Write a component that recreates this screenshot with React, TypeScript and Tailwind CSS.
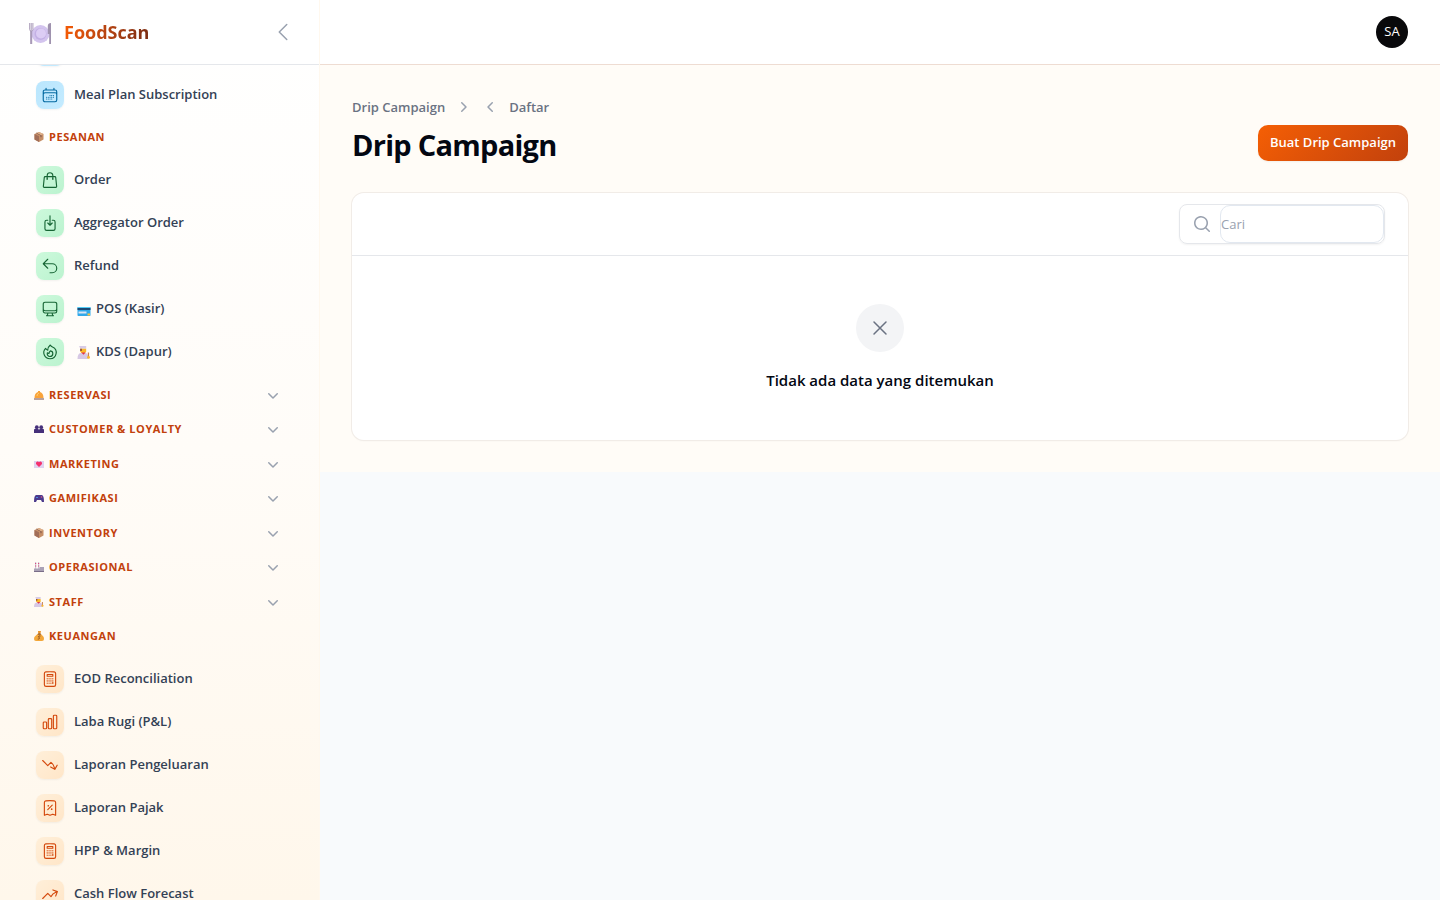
import type { ComponentType, ReactNode } from 'react';
import {
    HiOutlineArrowDownOnSquare,
    HiOutlineArrowTrendingDown,
    HiOutlineArrowTrendingUp,
    HiOutlineArrowUturnLeft,
    HiOutlineCalculator,
    HiOutlineCalendarDays,
    HiOutlineChartBar,
    HiOutlineChevronLeft,
    HiOutlineComputerDesktop,
    HiOutlineFire,
    HiOutlineReceiptPercent,
    HiOutlineShoppingBag,
    HiOutlineXMark,
    HiMiniChevronDown,
    HiMiniChevronLeft,
    HiMiniChevronRight,
    HiMiniMagnifyingGlass,
} from 'react-icons/hi2';

type Tone = 'sky' | 'green' | 'orange';

type NavItem = {
    label: string;
    icon: ComponentType<{ className?: string }>;
    emoji?: ReactNode;
};

const tones: Record<Tone, string> = {
    sky: 'from-[#bae6fd] to-[#c4ebff] text-[#0369a1]',
    green: 'from-[#cdf9dc] to-[#bbf3cf] text-[#166534]',
    orange: 'from-[#ffefd9] to-[#ffe6c8] text-[#d4480c]',
};

function PlateEmoji() {
    return (
        <svg viewBox="0 0 24 22" className="h-[22px] w-6" aria-hidden="true">
            <circle cx="12.5" cy="11" r="9" fill="#d3c4ee" />
            <circle cx="12.5" cy="11" r="6" fill="#c3b0e4" />
            <circle cx="13" cy="10.5" r="5" fill="#dccdf4" />
            <path d="M1.700 0v6.500q0 1.500 1.300 1.500M3.200 0v21M4.900 0v6.500q0 1.500-1.300 1.500" fill="none" stroke="#a99bb8" strokeWidth="1" />
            <path d="M3.200 8v13" stroke="#a99bb8" strokeWidth="2" />
            <path d="M19.800 3q0-3 3.200-3v21h-1.800v-10h-1.400z" fill="#9f92ae" />
        </svg>
    );
}

function BoxEmoji() {
    return (
        <svg viewBox="0 0 10 10" className="size-[10px]" aria-hidden="true">
            <path d="M5 0l4.500 2v5.500L5 10 .5 7.500V2z" fill="#c68e66" />
            <path d="M.5 2L5 4.200V10L.5 7.500z" fill="#a26e58" />
            <path d="M2.500 1l4.500 2.200v2" fill="none" stroke="#7d5348" strokeWidth="1" />
            <path d="M5 0l4.500 2L7 3.200 2.800 1z" fill="#deb08a" />
        </svg>
    );
}

function BellEmoji() {
    return (
        <svg viewBox="0 0 10 10" className="size-[10px]" aria-hidden="true">
            <path d="M.5 8Q.5 3 4 2V1h2v1q3.500 1 3.500 6z" fill="#f9a33a" />
            <path d="M3 6q0-2 2-3" stroke="#ffcf70" fill="none" />
            <path d="M0 8.500h10v1H0z" fill="#70443e" />
        </svg>
    );
}

function PeopleEmoji() {
    return (
        <svg viewBox="0 0 10 10" className="size-[10px]" aria-hidden="true">
            <circle cx="2.800" cy="3.200" r="1.900" fill="#46307a" />
            <circle cx="7.200" cy="3.200" r="1.900" fill="#46307a" />
            <path d="M0 9V6q0-1.200 1.500-1.200h2Q5 5 5 6q0-1 1.500-1.200h2Q10 4.800 10 6v3z" fill="#46307a" />
        </svg>
    );
}

function LetterEmoji() {
    return (
        <svg viewBox="0 0 10 10" className="size-[10px]" aria-hidden="true">
            <path d="M0 2h10v7H0z" fill="#dfd2ef" />
            <path d="M5 8L2 5Q1.500 3 3.200 2.500 4.500 2.300 5 3.200q.5-.9 1.800-.7Q8.500 3 8 5z" fill="#f5316e" />
        </svg>
    );
}

function GameEmoji() {
    return (
        <svg viewBox="0 0 10 10" className="size-[10px]" aria-hidden="true">
            <path d="M2 2h6q2 .5 2 7H8L7 7H3L2 9H0q0-6.500 2-7z" fill="#4b3a8c" />
            <path d="M2 4h2v1H2z" fill="#4d8be0" />
            <circle cx="7.500" cy="4" r=".8" fill="#e7567d" />
        </svg>
    );
}

function FactoryEmoji() {
    return (
        <svg viewBox="0 0 10 10" className="size-[10px]" aria-hidden="true">
            <path d="M1 0h1.200v7H1zM4 0h1.200v7H4z" fill="#cfc6d8" />
            <path d="M1 1h1.200v1H1zM4 1h1.200v1H4zM1 3.500h1.200v1H1zM4 3.500h1.200v1H4z" fill="#d8507e" />
            <path d="M0 6.500h5.500V5H10v5H0z" fill="#aaa1b5" />
            <path d="M0 9h10v1H0z" fill="#796d88" />
        </svg>
    );
}

function CookEmoji({ className = 'size-[10px]' }: { className?: string }) {
    return (
        <svg viewBox="0 0 12 12" className={className} aria-hidden="true">
            <path d="M1.500 0h6.500v2.500H2.500z" fill="#d8cbe6" />
            <path d="M2.500 2.500H8V5q-1 2-2.700 2T2.500 5z" fill="#fbb829" />
            <path d="M2.500 2.500H4v2H2.500z" fill="#8b4a3a" />
            <path d="M0 12q0-5 3-5.500h4.500q2.500.5 2.500 5.500z" fill="#d6c8e4" />
            <path d="M3.500 6h4L5.500 8z" fill="#e4324e" />
            <path d="M9.500 6h1.200v5H9.500z" fill="#c98157" />
            <circle cx="10.200" cy="10.500" r="1.300" fill="#fbb829" />
        </svg>
    );
}

function MoneyEmoji() {
    return (
        <svg viewBox="0 0 10 10" className="size-[10px]" aria-hidden="true">
            <path d="M4 0h3L6.300 3h-2z" fill="#e9942b" />
            <path d="M3.500 3h3.500q3 2.500 3 5 0 2-2 2H2Q0 10 0 8q0-2.500 3.500-5z" fill="#f3a73a" />
            <path d="M3.800 2.600h3v1h-3z" fill="#7d4a2e" />
            <path d="M6.500 5H5q-1 .3 0 1.300t-.3 1.800H3.800" fill="none" stroke="#8a4f22" strokeWidth="1" />
        </svg>
    );
}

function CardEmoji() {
    return (
        <svg viewBox="0 0 14 13" className="h-[13px] w-[14px]" aria-hidden="true">
            <rect width="13" height="9" x=".5" y="4" rx=".8" fill="#31a9ea" />
            <path d="M.5 5h13v2H.5z" fill="#1c4a74" />
            <path d="M.5 4h13v1H.5z" fill="#53cdf6" />
            <path d="M1.500 8.500h8v2h-8z" fill="#dbe4f4" />
            <path d="M10.500 10.500H13v2h-2.500z" fill="#fdc33f" />
        </svg>
    );
}

const mealItems: NavItem[] = [{ label: 'Meal Plan Subscription', icon: HiOutlineCalendarDays }];

const orderItems: NavItem[] = [
    { label: 'Order', icon: HiOutlineShoppingBag },
    { label: 'Aggregator Order', icon: HiOutlineArrowDownOnSquare },
    { label: 'Refund', icon: HiOutlineArrowUturnLeft },
    { label: 'POS (Kasir)', icon: HiOutlineComputerDesktop, emoji: <CardEmoji /> },
    { label: 'KDS (Dapur)', icon: HiOutlineFire, emoji: <CookEmoji className="h-[13px] w-[14px]" /> },
];

const closedGroups = [
    { label: 'Reservasi', emoji: <BellEmoji /> },
    { label: 'Customer & Loyalty', emoji: <PeopleEmoji /> },
    { label: 'Marketing', emoji: <LetterEmoji /> },
    { label: 'Gamifikasi', emoji: <GameEmoji /> },
    { label: 'Inventory', emoji: <BoxEmoji /> },
    { label: 'Operasional', emoji: <FactoryEmoji /> },
    { label: 'Staff', emoji: <CookEmoji /> },
];

const financeItems: NavItem[] = [
    { label: 'EOD Reconciliation', icon: HiOutlineCalculator },
    { label: 'Laba Rugi (P&L)', icon: HiOutlineChartBar },
    { label: 'Laporan Pengeluaran', icon: HiOutlineArrowTrendingDown },
    { label: 'Laporan Pajak', icon: HiOutlineReceiptPercent },
    { label: 'HPP & Margin', icon: HiOutlineCalculator },
    { label: 'Cash Flow Forecast', icon: HiOutlineArrowTrendingUp },
];

function IconTile({ tone, children }: { tone: Tone; children?: ReactNode }) {
    return (
        <span className={`flex size-7 shrink-0 items-center justify-center rounded-lg bg-linear-to-br shadow-xs ${tones[tone]}`}>
            {children}
        </span>
    );
}

function NavList({ items, tone }: { items: NavItem[]; tone: Tone }) {
    return (
        <ul className="py-1">
            {items.map(({ label, icon: Icon, emoji }) => (
                <li key={label}>
                    <a href="#" className="flex h-[43px] items-center gap-[10px] px-3 text-[13px] font-semibold text-[#334155]">
                        <IconTile tone={tone}>
                            <Icon className="size-[18px]" />
                        </IconTile>
                        <span className="flex items-center gap-[5px]">
                            {emoji && <span className="pl-[3px]">{emoji}</span>}
                            {label}
                        </span>
                    </a>
                </li>
            ))}
        </ul>
    );
}

function GroupHeader({ label, emoji, collapsed }: { label: string; emoji: ReactNode; collapsed?: boolean }) {
    return (
        <button type="button" className="flex w-full items-center gap-[5px] py-[9px] pr-3 pl-[10px] text-[11px] leading-normal font-bold text-[#c2410c]">
            {emoji}
            <span className="flex-1 text-left tracking-wider uppercase">{label}</span>
            {collapsed && <HiMiniChevronDown className="-my-1 size-5 text-gray-400" />}
        </button>
    );
}

function Sidebar() {
    return (
        <aside className="flex h-screen w-80 shrink-0 flex-col overflow-hidden border-r border-[#fff8ee] bg-linear-to-b from-white via-[#fffcf8] to-[#fff7eb]">
            <div className="flex h-[65px] shrink-0 items-center justify-between border-b border-gray-200 bg-white pr-6 pl-7">
                <div className="flex items-center gap-3">
                    <span className="pt-1">
                        <PlateEmoji />
                    </span>
                    <span className="bg-linear-to-r from-[#f55b04] to-[#7c2d12] bg-clip-text text-lg font-bold text-transparent">FoodScan</span>
                </div>
                <button type="button" aria-label="Tutup sidebar" className="text-gray-400">
                    <HiOutlineChevronLeft className="size-6" />
                </button>
            </div>
            <nav className="min-h-0 flex-1 overflow-hidden px-6">
                {/* list is scrolled a little, the row above only shows its lower edge */}
                <div className="-mt-[35px]">
                    <div className="flex h-[43px] items-center px-3">
                        <IconTile tone="sky" />
                    </div>
                    <div className="-mt-1">
                        <NavList items={mealItems} tone="sky" />
                    </div>
                    <GroupHeader label="Pesanan" emoji={<BoxEmoji />} />
                    <NavList items={orderItems} tone="green" />
                    {closedGroups.map((group) => (
                        <GroupHeader key={group.label} label={group.label} emoji={group.emoji} collapsed />
                    ))}
                    <GroupHeader label="Keuangan" emoji={<MoneyEmoji />} />
                    <NavList items={financeItems} tone="orange" />
                </div>
            </nav>
        </aside>
    );
}

export default function App() {
    return (
        <div className="flex min-h-screen bg-[#f8fafc] font-['Open_Sans','Noto_Sans',sans-serif]">
            <Sidebar />
            <div className="min-w-0 flex-1">
                <header className="flex h-[65px] items-center justify-end border-b border-[#eedcd2] bg-white px-8">
                    <button type="button" className="size-8 rounded-full bg-[#09090b] text-[13px] text-white">
                        SA
                    </button>
                </header>
                <main className="flex flex-col gap-8 bg-[#fffcf7] p-8">
                    <div className="flex items-end justify-between">
                        <div>
                            <nav className="mb-3 flex items-center gap-2 text-[13px] leading-5 font-semibold text-gray-500">
                                <a href="#">Drip Campaign</a>
                                <HiMiniChevronRight className="size-5 text-gray-400" />
                                <HiMiniChevronLeft className="size-5 text-gray-400" />
                                <span>Daftar</span>
                            </nav>
                            <h1 className="text-[29px] leading-8 font-bold tracking-tight text-gray-950">Drip Campaign</h1>
                        </div>
                        <button type="button" className="h-9 rounded-[10px] bg-linear-135 from-[#f55f04] to-[#c2410c] px-3 text-[13px] font-semibold text-white shadow-xs">
                            Buat Drip Campaign
                        </button>
                    </div>
                    <section className="rounded-xl bg-white shadow-xs ring-1 ring-[#f1ece7]">
                        <div className="flex h-[63px] items-center justify-end border-b border-gray-200 pr-[23px] pl-6">
                            <label className="flex h-10 w-[206px] items-center rounded-lg border border-gray-200 shadow-xs">
                                <HiMiniMagnifyingGlass className="mr-2 ml-3 size-5 shrink-0 text-gray-400" />
                                <input
                                    type="search"
                                    aria-label="Cari"
                                    placeholder="Cari"
                                    className="h-[38px] min-w-0 flex-1 rounded-[10px] border border-[#e2e8f0] text-[13px] placeholder:text-gray-400"
                                />
                            </label>
                        </div>
                        <div className="flex flex-col items-center gap-4 py-12">
                            <span className="flex size-12 items-center justify-center rounded-full bg-gray-100">
                                <HiOutlineXMark className="size-6 text-gray-500" />
                            </span>
                            <h2 className="text-[15px] leading-6 font-semibold text-gray-950">Tidak ada data yang ditemukan</h2>
                        </div>
                    </section>
                </main>
            </div>
        </div>
    );
}
